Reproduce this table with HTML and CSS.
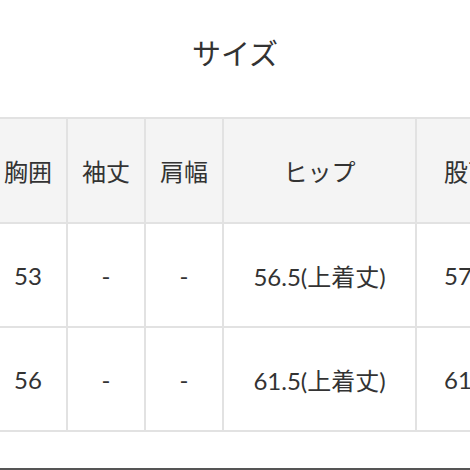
FILE: index.html
```html
<!DOCTYPE html>
<html lang="ja">
<head>
<meta charset="utf-8">
<link rel="stylesheet" href="styles.css">
</head>
<body>
<h2 class="title">サイズ</h2>
<div class="scroller">
  <div class="size-grid">
    <div class="cell head">胸囲</div>
    <div class="cell head">袖丈</div>
    <div class="cell head">肩幅</div>
    <div class="cell head">ヒップ</div>
    <div class="cell head tail">股下</div>
    <div class="cell">53</div>
    <div class="cell">-</div>
    <div class="cell">-</div>
    <div class="cell">56.5(上着丈)</div>
    <div class="cell tail">57</div>
    <div class="cell">56</div>
    <div class="cell">-</div>
    <div class="cell">-</div>
    <div class="cell">61.5(上着丈)</div>
    <div class="cell tail">61</div>
  </div>
</div>
<div class="bottom-bar"></div>
</body>
</html>
```
FILE: styles.css
```css
html, body {
  margin: 0;
  padding: 0;
  background: #ffffff;
  width: 470px;
  height: 470px;
  overflow: hidden;
  font-family: Lato, "Noto Sans CJK JP", sans-serif;
  color: #333333;
}
.title {
  margin: 0;
  height: 117px;
  box-sizing: border-box;
  padding-top: 35px;
  font-size: 29px;
  line-height: 34px;
  font-weight: 400;
  text-align: center;
  font-family: "Noto Sans CJK JP", sans-serif;
  color: #333333;
}
.scroller {
  width: 470px;
  overflow: hidden;
}
.size-grid {
  margin-left: -10px;
  width: 600px;
  display: grid;
  grid-template-columns: 76px 76px 76px 191px 1fr;
  grid-template-rows: 103px 102px 102px;
  gap: 2px;
  padding: 2px 0;
  background: #e2e2e2;
}
.cell {
  background: #ffffff;
  display: flex;
  align-items: center;
  justify-content: center;
  font-size: 24px;
  white-space: nowrap;
}
.head {
  background: #f4f4f4;
  font-family: "Noto Sans CJK JP", sans-serif;
  font-size: 24px;
}
.tail {
  justify-content: flex-start;
  padding-left: 27px;
}
.bottom-bar {
  margin-top: 36px;
  height: 2px;
  background: #555555;
}
```
